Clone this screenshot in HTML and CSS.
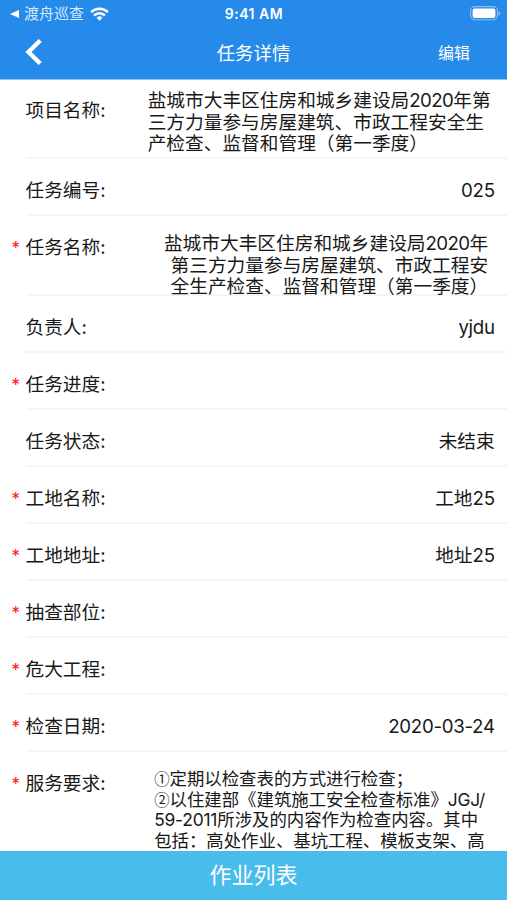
FILE: index.html
```html
<!DOCTYPE html>
<html lang="zh-CN">
<head>
<meta charset="utf-8">
<title>任务详情</title>
<link rel="stylesheet" href="styles.css">
</head>
<body>
    <header>
        <div class="status">
            <div class="status-left">
                <svg width="9" height="8" viewBox="0 0 9 8"><path d="M9 0v8L0 4z" fill="#fff"/></svg>
                <span class="app">渡舟巡查</span>
                <svg width="19" height="14" viewBox="0 0 19 14" fill="none" stroke="#fff" stroke-width="2.5">
                    <path d="M1.1 5.2a12 12 0 0 1 16.8 0"/>
                    <path d="M4.1 8.5a7.7 7.7 0 0 1 10.8 0"/>
                    <path d="M9.5 13.7L6.6 10.8a4.1 4.1 0 0 1 5.8 0z" fill="#fff" stroke="none"/>
                </svg>
            </div>
            <span class="clock">9:41 AM</span>
            <svg class="battery" width="31" height="15" viewBox="0 0 31 15">
                <rect x=".6" y=".6" width="26.8" height="13.2" rx="4" fill="none" stroke="#fff" stroke-opacity=".45" stroke-width="1.1"/>
                <rect x="2.6" y="2.5" width="22.8" height="9.4" rx="2" fill="#fff"/>
                <path d="M28.7 5v4.6q1.5-.7 1.5-2.3T28.7 5z" fill="#fff" fill-opacity=".5"/>
            </svg>
        </div>
        <div class="nav">
            <svg class="back" width="17" height="26" viewBox="0 0 17 26"><path d="M15.2 1.5L3.5 13l11.7 11.5" fill="none" stroke="#fff" stroke-width="4.4"/></svg>
            <span class="title">任务详情</span>
            <span class="edit">编辑</span>
        </div>
    </header>
    <main>
        <div class="row tall">
            <label>项目名称:</label>
            <p class="project">盐城市大丰区住房和城乡建设局<span class="num">2020</span>年第<br>三方力量参与房屋建筑、市政工程安全生<br>产检查、监督和管理（第一季度）</p>
        </div>
        <div class="row">
            <label>任务编号:</label>
            <span class="value num">025</span>
        </div>
        <div class="row tall">
            <i>*</i><label>任务名称:</label>
            <p class="task">盐城市大丰区住房和城乡建设局<span class="num">2020</span>年<br>第三方力量参与房屋建筑、市政工程安<br>全生产检查、监督和管理（第一季度）</p>
        </div>
        <div class="row">
            <label>负责人:</label>
            <span class="value num">yjdu</span>
        </div>
        <div class="row">
            <i>*</i><label>任务进度:</label>
        </div>
        <div class="row">
            <label>任务状态:</label>
            <span class="value">未结束</span>
        </div>
        <div class="row">
            <i>*</i><label>工地名称:</label>
            <span class="value">工地<span class="num">25</span></span>
        </div>
        <div class="row">
            <i>*</i><label>工地地址:</label>
            <span class="value">地址<span class="num">25</span></span>
        </div>
        <div class="row">
            <i>*</i><label>抽查部位:</label>
        </div>
        <div class="row">
            <i>*</i><label>危大工程:</label>
        </div>
        <div class="row">
            <i>*</i><label>检查日期:</label>
            <span class="value num">2020-03-24</span>
        </div>
        <div class="row last">
            <i>*</i><label>服务要求:</label>
            <p class="require"><span class="circle">①</span>定期以检查表的方式进行检查；<br><span class="circle">②</span>以住建部《建筑施工安全检查标准》<span class="num">JGJ/</span><br><span class="num">59-2011</span>所涉及的内容作为检查内容。其中<br>包括：高处作业、基坑工程、模板支架、高</p>
        </div>
    </main>
    <footer>作业列表</footer>
</body>
</html>
```
FILE: styles.css
```css
*
{
    box-sizing: border-box;
}
body
{
    margin: 0;
    height: 900px;
    display: flex;
    flex-direction: column;
    overflow: hidden;
    background-color: #fff;
    color: #181818;
    font-family: Inter, "Noto Sans CJK SC", sans-serif;
    font-size: 18.7px;
}
header
{
    height: 79px;
    flex: none;
    background-color: #268aea;
    color: #fff;
}
.status
{
    height: 27px;
    display: grid;
    grid-template-columns: 1fr auto 1fr;
    align-items: center;
    padding: 0 6px 0 10px;
}
.status-left
{
    display: flex;
    align-items: center;
}
.app
{
    margin: 0 6px 0 5px;
    font-size: 15px;
    line-height: 27px;
    color: #d8eafc;
}
.clock
{
    margin-right: 3px;
    font-size: 14px;
    font-weight: 600;
    letter-spacing: .5px;
}
.battery
{
    justify-self: end;
}
.nav
{
    height: 52px;
    display: grid;
    grid-template-columns: 1fr auto 1fr;
    align-items: center;
    padding: 0 37px 2px 25px;
}
.title
{
    margin-left: 12px;
    font-size: 18.4px;
}
.edit
{
    justify-self: end;
    font-size: 16px;
}
main
{
    flex: 1;
    overflow: hidden;
    line-height: 22px;
    box-shadow: inset 0 1px #8fc4f6;
}
.row
{
    height: 57px;
    display: flex;
    position: relative;
    margin-left: 25.5px;
    padding: 21px 12.3px 0 0;
    border-bottom: 2px solid #f5f5f6;
    white-space: nowrap;
}
.row.tall
{
    height: 80px;
}
.row.last
{
    height: 110px;
    border: 0;
}
i
{
    position: absolute;
    left: -14px;
    top: 21px;
    color: #f11;
    font-style: normal;
    font-size: 17px;
}
.value
{
    margin-left: auto;
}
.num
{
    letter-spacing: -.3px;
}
p
{
    margin: 0 0 0 auto;
    line-height: 21.7px;
}
.project
{
    margin: -10px 0 0 42px;
    font-size: 18.7px;
}
.project .num
{
    letter-spacing: -.6px;
}
.task
{
    margin: -4px 6.5px 0 auto;
    text-align: right;
}
.task .num
{
    letter-spacing: -.6px;
}
.require
{
    margin: -4px 0 0 48.5px;
    font-size: 17.4px;
    line-height: 20.6px;
}
.require .num
{
    letter-spacing: -.2px;
}
.circle
{
    font-family: "Noto Sans CJK SC", sans-serif;
    font-size: 15.4px;
    line-height: 1;
}
footer
{
    height: 49px;
    flex: none;
    background-color: #48bceb;
    color: #fff;
    font-size: 22px;
    line-height: 49px;
    text-align: center;
}
```
